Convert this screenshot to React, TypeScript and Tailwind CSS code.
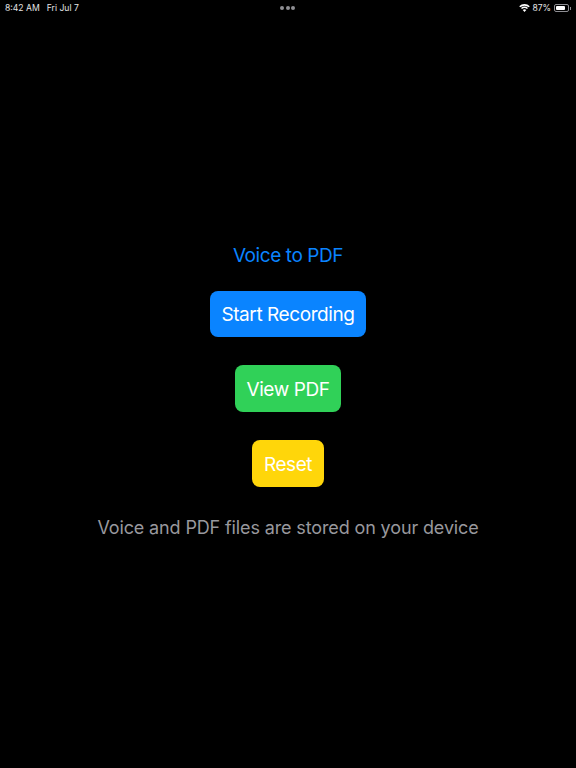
const font = "'Inter', 'Liberation Sans', sans-serif";

function Wifi() {
  return (
    <svg width="11" height="8" viewBox="0 0 11 8" className="block">
      <path d="M5.5 8 L3.7 5.9 A2.8 2.8 0 0 1 7.3 5.9 Z" fill="#fff" />
      <path d="M3 5.1 L2 4 A5 5 0 0 1 9 4 L8 5.1 A3.6 3.6 0 0 0 3 5.1 Z" fill="#fff" />
      <path d="M1.3 3.3 L0.2 2.2 A7.6 7.6 0 0 1 10.8 2.2 L9.7 3.3 A6.2 6.2 0 0 0 1.3 3.3 Z" fill="#fff" />
    </svg>
  );
}

export default function App() {
  return (
    <div className="w-[576px] h-[768px] bg-black flex flex-col items-center overflow-hidden font-[375]" style={{ fontFamily: font }}>
      <div className="w-full h-[14px] grid grid-cols-3 items-center pl-[5px] pr-[5px] text-[8.6px] leading-[14px] text-[#e5e5e5]">
        <div className="flex gap-[7px] pt-[1px]"><span>8:42 AM</span><span>Fri Jul 7</span></div>
        <div className="flex gap-[1.5px] justify-center">
          <span className="w-[4px] h-[4px] rounded-full bg-[#8e8e93]" />
          <span className="w-[4px] h-[4px] rounded-full bg-[#8e8e93]" />
          <span className="w-[4px] h-[4px] rounded-full bg-[#8e8e93]" />
        </div>
        <div className="flex items-center justify-end pt-[1px]">
          <Wifi />
          <span className="ml-[2px]">87%</span>
          <div className="flex items-center gap-[1px] ml-[3px]">
            <div className="w-[15px] h-[8px] rounded-[2px] border border-[#8e8e93] p-[1px]"><div className="h-full w-[85%] bg-white rounded-[1px]" /></div>
            <div className="w-[1px] h-[3px] bg-[#8e8e93]" />
          </div>
        </div>
      </div>
      <div className="mt-[228px] text-[19px] leading-[28px] tracking-[-0.42px] text-[#0a84ff]">Voice to PDF</div>
      <div className="mt-[20.5px] h-[46.67px] w-[156px] pt-[2px] rounded-[8px] bg-[#0a84ff] flex items-center justify-center text-white text-[19px] tracking-[-0.42px]">Start Recording</div>
      <div className="mt-[28.33px] h-[46.67px] w-[105.5px] pt-[2px] rounded-[8px] bg-[#30d158] flex items-center justify-center text-white text-[19px] tracking-[-0.42px]">View PDF</div>
      <div className="mt-[28.33px] h-[46.67px] w-[72px] pt-[2px] rounded-[8px] bg-[#ffd60a] flex items-center justify-center text-white text-[19px] tracking-[-0.42px]">Reset</div>
      <div className="mt-[28px] text-[18px] leading-[26px] tracking-[-0.13px] text-[#98989d]">Voice and PDF files are stored on your device</div>
    </div>
  );
}
